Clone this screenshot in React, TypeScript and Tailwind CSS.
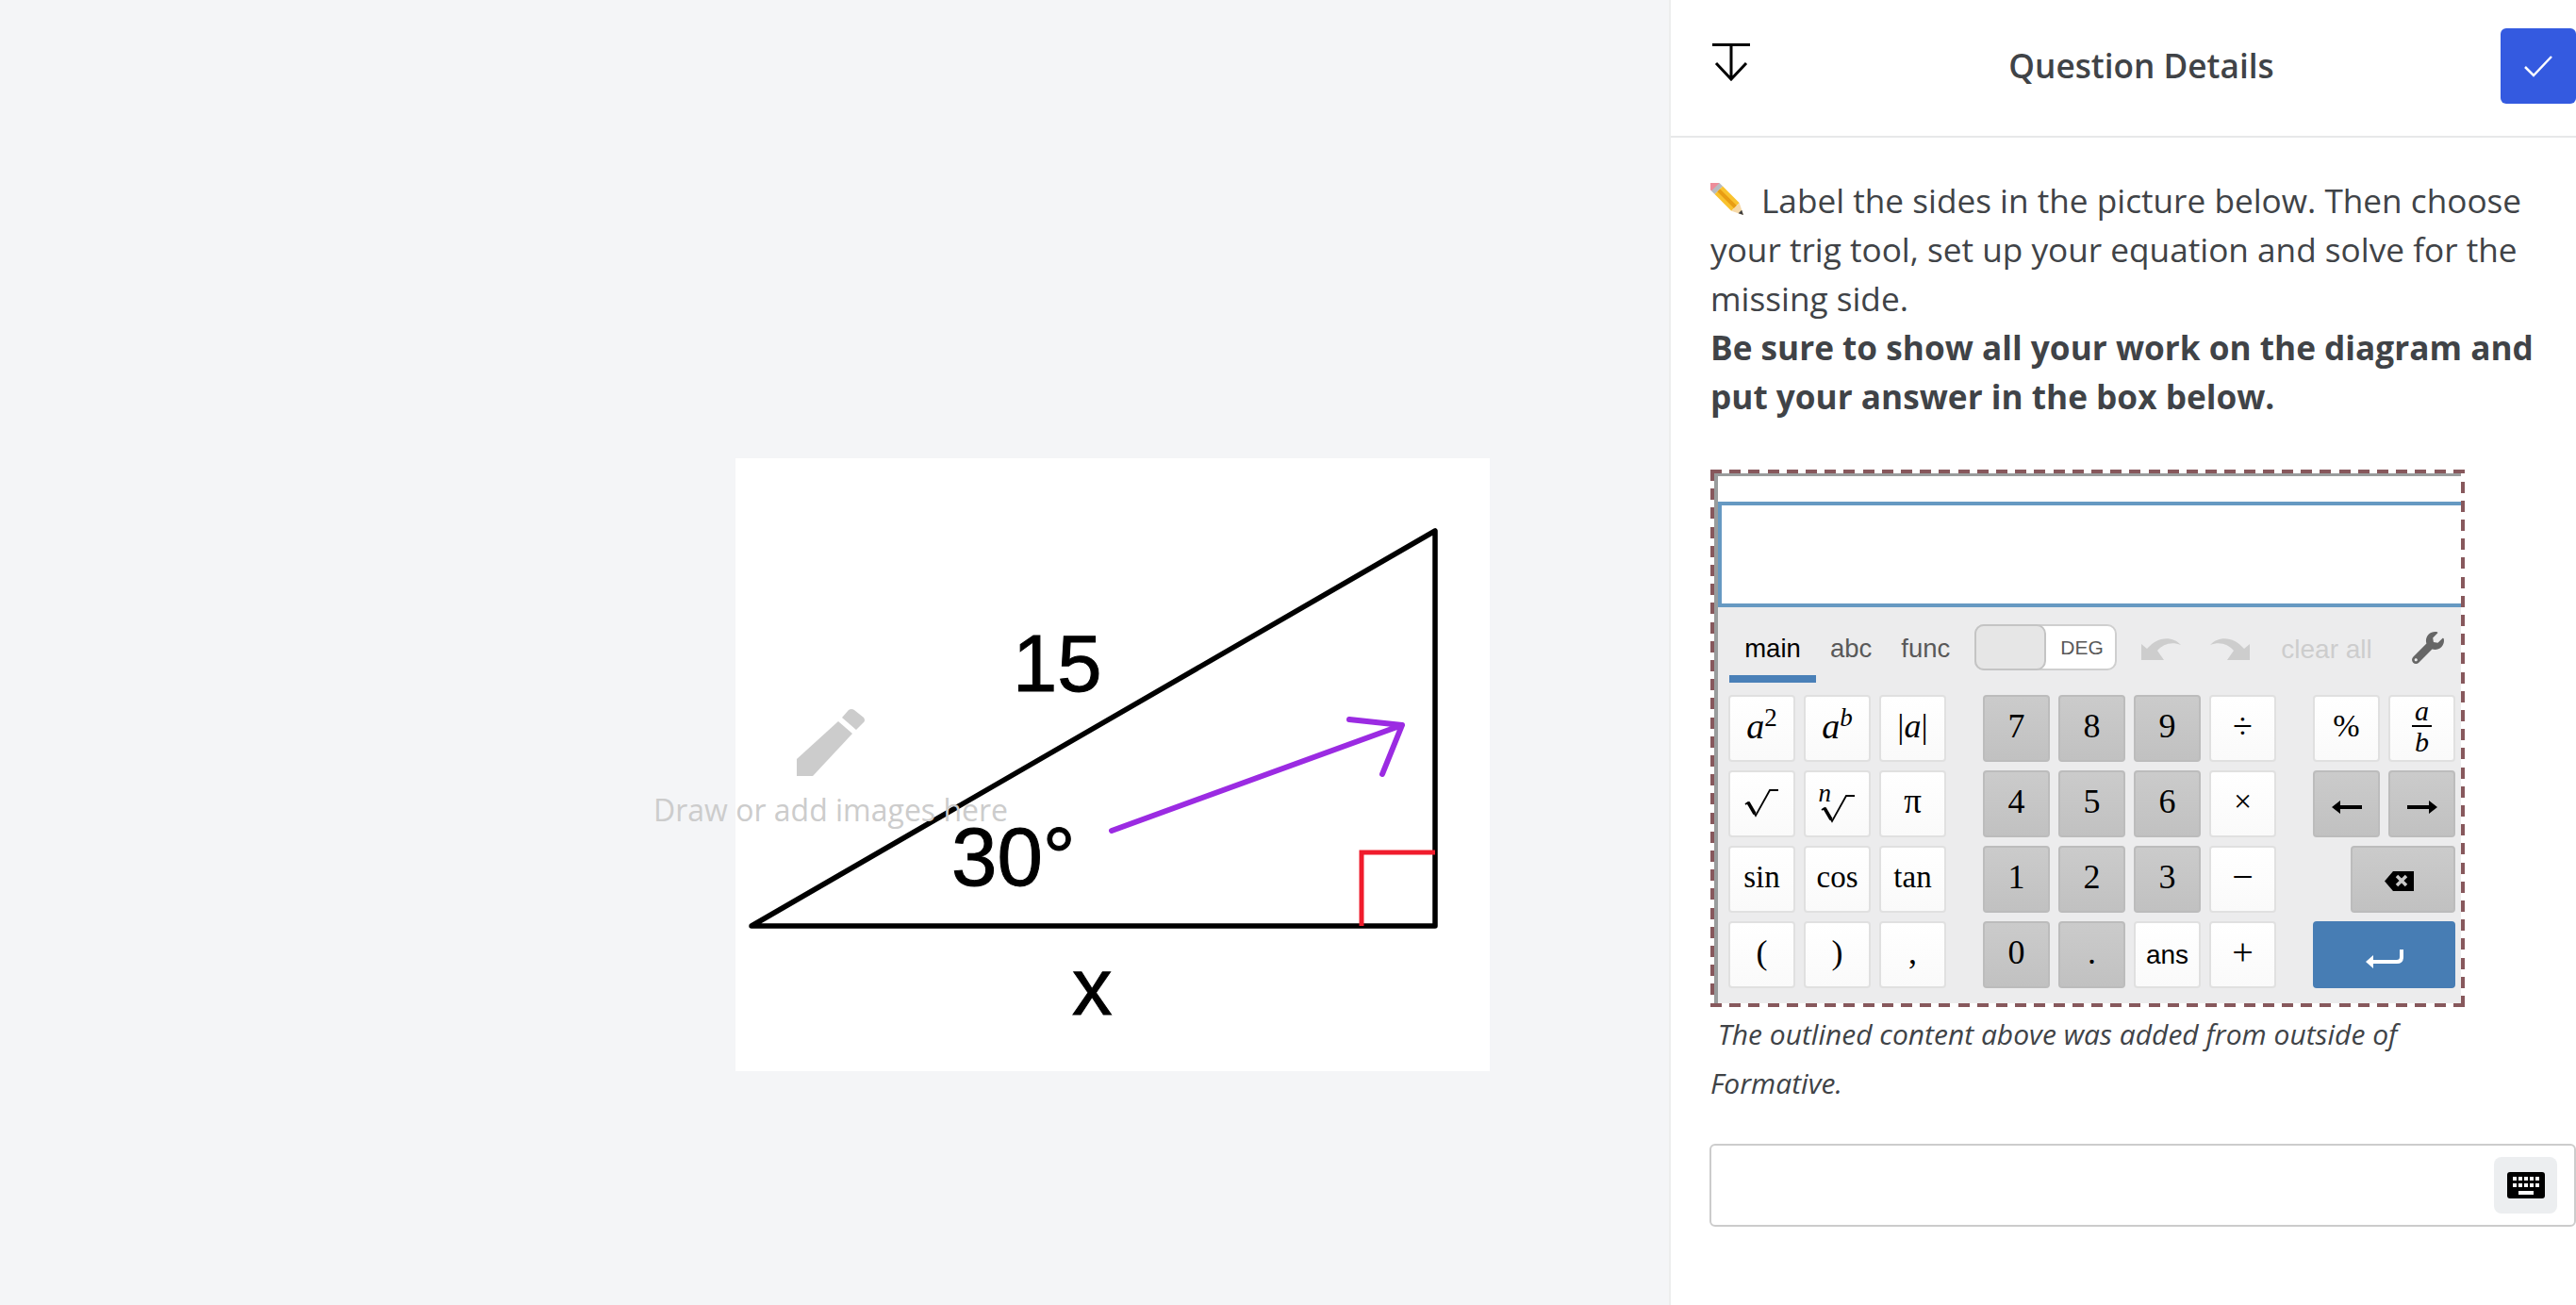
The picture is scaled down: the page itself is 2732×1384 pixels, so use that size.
import type { ReactNode } from "react";
import { FaWrench } from "react-icons/fa";

const serif = "font-['Liberation_Serif',serif]";

const Key = ({
  children,
  dark,
  className = "",
}: {
  children: ReactNode;
  dark?: boolean;
  className?: string;
}) => (
  <div
    className={`flex h-[71px] w-[71px] shrink-0 items-center justify-center rounded-[4px] border-2 pb-[5px] text-black ${serif} ${
      dark
        ? "border-[#bcbcbc] bg-gradient-to-b from-[#cbcbcb] to-[#c1c1c1]"
        : "border-[#e0e0e0] bg-gradient-to-b from-white to-[#fafafa]"
    } ${className}`}
  >
    {children}
  </div>
);

const Sqrt = ({ className = "" }: { className?: string }) => (
  <svg width="37" height="31" viewBox="0 0 37 31" className={className}>
    <path d="M1 17 L4 15 L12 29 L27 2 H36" fill="none" stroke="#000" strokeWidth="1.8" />
    <path d="M4 15 L11 27" fill="none" stroke="#000" strokeWidth="3.5" />
  </svg>
);

const Undo = ({ flip }: { flip?: boolean }) => (
  <svg width="42" height="24" viewBox="0 0 42 24" className={flip ? "-scale-x-100" : ""}>
    <path d="M0 7 L6 12 C16 0 32 -3 42 8 C32 4 23 7 17 14 L24 24 H0 Z" fill="#cdcdcd" />
  </svg>
);

const Row = ({ children }: { children: ReactNode }) => (
  <div className="flex gap-[9px]">{children}</div>
);

const App = () => {
  return (
    <div className="flex h-screen w-full overflow-hidden bg-white font-['Open_Sans',sans-serif] text-[#404347]">
      {/* canvas */}
      <div className="relative w-[1770px] shrink-0 bg-[#f4f5f7]">
        <svg
          width="800"
          height="650"
          viewBox="780 486 800 650"
          className="absolute left-[780px] top-[486px] bg-white"
        >
          <path d="M797 982 L1522 563 V982 Z" fill="none" stroke="#000" strokeWidth="5.5" strokeLinejoin="round" />
          <path d="M1444 982 V904 H1522" fill="none" stroke="#f01c2c" strokeWidth="5" />
          <g fill="#000" stroke="#000" strokeWidth="1" fontFamily="'Liberation Sans', sans-serif">
            <text x="1074" y="733" fontSize="85">15</text>
            <text x="1009" y="939" fontSize="87">30°</text>
            <text x="1137" y="1076" fontSize="85">x</text>
          </g>
          <path
            d="M1179 881 L1487 769 M1431 763 L1487 769 L1466 821"
            fill="none"
            stroke="#9b2be2"
            strokeWidth="6"
            strokeLinecap="round"
            strokeLinejoin="round"
          />
        </svg>
        <div className="absolute left-[693px] top-[752px] flex w-[376px] flex-col items-center text-[#cccccc]">
          <svg width="72" height="71" viewBox="0 0 72 71" fill="#cccccc">
            <path d="M0 53 L44 13 L59 26 L17 71 H0 Z" />
            <path d="M48 9 L55 1 Q58 -1 61 1 L71 9 Q73 12 71 14 L63 22 Z" />
          </svg>
          <span className="mt-[14px] whitespace-nowrap text-[32px] leading-[44px]">Draw or add images here</span>
        </div>
      </div>

      {/* question panel */}
      <div className="flex min-w-0 flex-1 flex-col border-l-2 border-[#eceded] bg-white">
        <div className="relative flex h-[146px] shrink-0 items-center justify-center border-b-2 border-[#e7e8e9] pb-[7px] pl-[38px]">
          <svg width="40" height="40" viewBox="0 0 40 40" className="absolute left-[44px] top-[46px]" fill="none" stroke="#000">
            <path d="M0 1.5 H40" strokeWidth="3" />
            <path d="M20 3 V37 M4 21 L20 38 L36 21" strokeWidth="3" />
          </svg>
          <span className="text-[35.2px] font-semibold leading-[48px]">Question Details</span>
          <div className="absolute right-0 top-[30px] flex h-[80px] w-[80px] items-center justify-center rounded-[6px] bg-[#345ae0]">
            <svg width="32" height="24" viewBox="0 0 32 24" fill="none" stroke="#fff" strokeWidth="2.5">
              <path d="M2 13 L11 22 L30 2" />
            </svg>
          </div>
        </div>

        <div className="pl-[42px] pt-[40px]">
          <div className="pr-[32px] text-[35.2px] leading-[52px]">
            <p>
              <svg width="36" height="34" viewBox="0 0 36 34" className="mr-[18px] inline-block align-[-2px]">
                <g transform="translate(18 17) rotate(45)">
                  <rect x="-25" y="-6" width="8" height="12" rx="2" fill="#ee8c99" />
                  <rect x="-18" y="-6" width="5" height="12" fill="#b7bcc1" />
                  <rect x="-13" y="-6" width="25" height="12" fill="#f9c22e" />
                  <rect x="-13" y="-2" width="25" height="4" fill="#e89d13" />
                  <path d="M12 -6 L24 0 L12 6 Z" fill="#f6d9a8" />
                  <path d="M19 -2.5 L24 0 L19 2.5 Z" fill="#3f3f3f" />
                </g>
              </svg>
              Label the sides in the picture below. Then choose your trig tool, set up your equation and solve for the
              missing side.
            </p>
            <p className="font-bold">Be sure to show all your work on the diagram and put your answer in the box below.</p>
          </div>

          {/* embedded calculator */}
          <div className="mt-[52px] w-[800px] bg-[repeating-linear-gradient(90deg,#87585c_0_12px,transparent_12px_20.2px),repeating-linear-gradient(90deg,#87585c_0_12px,transparent_12px_20.2px),repeating-linear-gradient(0deg,#87585c_0_12px,transparent_12px_20.2px),repeating-linear-gradient(180deg,#87585c_0_12px,transparent_12px_20.2px)] bg-[length:100%_4px,100%_4px,4px_100%,4px_100%] bg-[position:top_left,bottom_left,right_top,left_top] bg-no-repeat p-[4px]">
            <div className="border-l-4 border-t-[3px] border-[#999c9c]">
              <div className="h-[27px] bg-white" />
              <div className="h-[112px] border-y-4 border-l-4 border-[#6699c2] bg-white" />
              <div className="h-[420px] bg-[#ececed] pl-[11px] text-[27.5px] font-['Liberation_Sans',sans-serif] leading-[30px] text-[#595959]">
                <div className="flex h-[93px] items-start">
                  <div className="ml-px h-[80px] w-[92px] border-b-8 border-[#4a80b8] pt-[29px] text-center text-black">main</div>
                  <div className="ml-[15px] pt-[29px]">abc</div>
                  <div className="ml-[31px] pt-[29px]">func</div>
                  <div className="ml-[26px] mt-[18px] flex h-[49px] w-[151px] rounded-[10px] border-2 border-[#cfcfcf] bg-white">
                    <div className="-m-[2px] h-[49px] w-[76px] rounded-[10px] border-2 border-[#c4c4c4] bg-[#e6e6e6]" />
                    <span className="ml-[17px] text-[21px] leading-[45px]">DEG</span>
                  </div>
                  <div className="ml-[26px] mt-[32px]">
                    <Undo />
                  </div>
                  <div className="ml-[31px] mt-[32px]">
                    <Undo flip />
                  </div>
                  <div className="ml-[33px] whitespace-nowrap pt-[30px] text-[28px] text-[#cdcdcd]">clear all</div>
                  <FaWrench className="ml-[42px] mt-[26px] shrink-0 text-[34px] text-[#666666]" />
                </div>

                <div className="flex flex-col gap-[9px]">
                  <div className="flex gap-[39px]">
                    <Row>
                      <Key>
                        <span className="text-[38px] italic leading-[40px]">a<sup className="text-[27px] not-italic">2</sup></span>
                      </Key>
                      <Key>
                        <span className="text-[38px] italic leading-[40px]">a<sup className="text-[27px]">b</sup></span>
                      </Key>
                      <Key>
                        <span className="text-[36px]">|<i>a</i>|</span>
                      </Key>
                    </Row>
                    <Row>
                      <Key dark className="text-[36px]">7</Key>
                      <Key dark className="text-[36px]">8</Key>
                      <Key dark className="text-[36px]">9</Key>
                      <Key className="text-[38px]">÷</Key>
                    </Row>
                    <Row>
                      <Key className="text-[34px]">%</Key>
                      <Key>
                        <span className="flex flex-col items-center text-[30px] italic">
                          <span className="border-b-2 border-black px-[3px] leading-[30px]">a</span>
                          <span className="mt-px leading-[30px]">b</span>
                        </span>
                      </Key>
                    </Row>
                  </div>
                  <div className="flex gap-[39px]">
                    <Row>
                      <Key className="!pb-[2px]">
                        <Sqrt />
                      </Key>
                      <Key>
                        <span className="relative block h-[46px] w-[40px]">
                          <i className="absolute -top-[1px] left-0 text-[27px] leading-[30px]">n</i>
                          <Sqrt className="absolute bottom-0 left-[2px]" />
                        </span>
                      </Key>
                      <Key className="text-[37px]">π</Key>
                    </Row>
                    <Row>
                      <Key dark className="text-[36px]">4</Key>
                      <Key dark className="text-[36px]">5</Key>
                      <Key dark className="text-[36px]">6</Key>
                      <Key className="text-[34px]">×</Key>
                    </Row>
                    <Row>
                      <Key dark className="!pb-0">
                        <svg width="32" height="14" viewBox="0 0 32 14" className="mt-[6px]">
                          <path d="M0 7 L9 0 V5 H32 V9 H9 V14 Z" />
                        </svg>
                      </Key>
                      <Key dark className="!pb-0">
                        <svg width="32" height="14" viewBox="0 0 32 14" className="mt-[6px]">
                          <path d="M32 7 L23 0 V5 H0 V9 H23 V14 Z" />
                        </svg>
                      </Key>
                    </Row>
                  </div>
                  <div className="flex gap-[39px]">
                    <Row>
                      <Key className="text-[33px]">sin</Key>
                      <Key className="text-[33px]">cos</Key>
                      <Key className="text-[33px]">tan</Key>
                    </Row>
                    <Row>
                      <Key dark className="text-[36px]">1</Key>
                      <Key dark className="text-[36px]">2</Key>
                      <Key dark className="text-[36px]">3</Key>
                      <Key className="text-[40px]">−</Key>
                    </Row>
                    <div className="flex w-[151px] justify-end">
                      <Key dark className="!w-[111px] !pb-0 pr-[8px]">
                        <svg width="31" height="21" viewBox="0 0 31 21" className="mt-[4px]">
                          <path d="M0 10.5 L9 0 H31 V21 H9 Z" />
                          <path d="M13 5 L23 15 M23 5 L13 15" stroke="#c8c8c8" strokeWidth="3.5" />
                        </svg>
                      </Key>
                    </div>
                  </div>
                  <div className="flex gap-[39px]">
                    <Row>
                      <Key className="text-[36px]">(</Key>
                      <Key className="text-[36px]">)</Key>
                      <Key className="text-[36px]">,</Key>
                    </Row>
                    <Row>
                      <Key dark className="text-[36px]">0</Key>
                      <Key dark className="text-[36px]">.</Key>
                      <Key className="!pb-0">
                        <span className="font-['Liberation_Sans',sans-serif] text-[28px]">ans</span>
                      </Key>
                      <Key className="text-[40px]">+</Key>
                    </Row>
                    <div className="flex h-[71px] w-[151px] items-center justify-center rounded-[4px] bg-[#477db4]">
                      <svg width="40" height="20" viewBox="0 0 40 20" className="mt-[8px]" fill="none" stroke="#fff" strokeWidth="4">
                        <path d="M38 0 V8 Q38 13 33 13 H6" />
                        <path d="M0 13 L8 6 V20 Z" fill="#fff" stroke="none" />
                      </svg>
                    </div>
                  </div>
                </div>
              </div>
            </div>
          </div>

          <p className="mt-[3px] w-[800px] text-[30px] italic leading-[52px]">
            &nbsp;The outlined content above was added from outside of Formative.
          </p>

          <div className="-ml-px mt-[38px] flex h-[88px] items-center justify-end rounded-[6px] border-2 border-[#cccccc] bg-white pr-[18px]">
            <div className="flex h-[60px] w-[67px] items-center justify-center rounded-[8px] bg-[#eceef0]">
              <svg width="40" height="28" viewBox="0 0 40 28">
                <rect width="40" height="28" rx="3" fill="#000" />
                <path
                  d="M6 5h4v4H6zM12 5h4v4h-4zM18 5h4v4h-4zM24 5h4v4h-4zM30 5h4v4h-4zM6 12h4v4H6zM12 12h4v4h-4zM18 12h4v4h-4zM24 12h4v4h-4zM30 12h4v4h-4zM12 20h16v4H12z"
                  fill="#fff"
                />
              </svg>
            </div>
          </div>
        </div>
      </div>
    </div>
  );
};

export default App;
